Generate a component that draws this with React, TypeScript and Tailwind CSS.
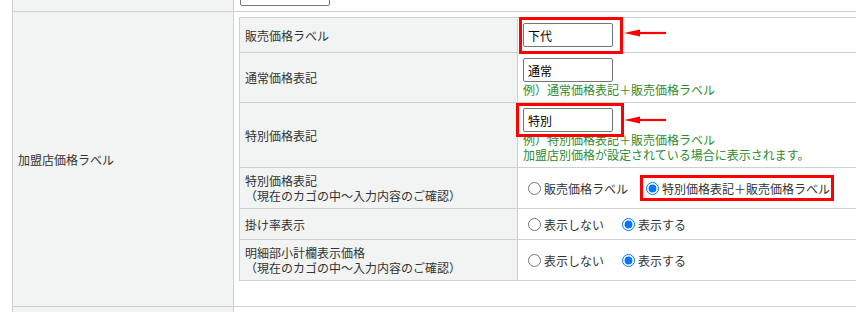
import React from "react";

const font = { fontFamily: '"Noto Sans CJK JP", "Noto Sans", sans-serif' };

function Radio({ label, checked }: { label: string; checked?: boolean }) {
  return (
    <label className="flex items-center gap-[3px]">
      <input type="radio" defaultChecked={checked} className="m-0 h-[13px] w-[13px] accent-[#0075ff]" />
      <span>{label}</span>
    </label>
  );
}

function TextBox({ value }: { value: string }) {
  return (
    <input
      type="text"
      defaultValue={value}
      className="m-0 h-[24px] w-[90px] rounded-[2px] border border-[#767676] bg-white px-[4px] text-[12px] text-black outline-none"
    />
  );
}

function Row({
  h,
  label,
  children,
  last,
}: {
  h: string;
  label: React.ReactNode;
  children: React.ReactNode;
  last?: boolean;
}) {
  return (
    <div className={`flex ${h} ${last ? "" : "border-b border-[#d0d0d0]"}`}>
      <div className="flex w-[278px] shrink-0 items-center border-r border-[#d0d0d0] bg-[#f2f3f3] pl-[5px]">
        {label}
      </div>
      <div className="flex flex-1 items-center">{children}</div>
    </div>
  );
}

function Arrow({ top }: { top: string }) {
  return (
    <svg className={`absolute left-[623px] ${top}`} width="46" height="10" viewBox="0 0 46 10">
      <polygon points="1,5 17,1.5 17,8.5" fill="#f00" />
      <line x1="14" y1="5" x2="43" y2="5" stroke="#f00" strokeWidth="2.2" />
    </svg>
  );
}

export default function App() {
  return (
    <div
      className="relative h-[312px] w-[856px] overflow-hidden bg-white pl-[12px] text-[12px] leading-[15px] text-[#333]"
      style={font}
    >
      <div className="w-[1000px] border-l border-[#d0d0d0]">
        {/* previous row, cut off */}
        <div className="flex h-[12px] border-b border-[#d0d0d0]">
          <div className="w-[221px] shrink-0 border-r border-[#d0d0d0] bg-[#f2f3f3]" />
          <div className="flex flex-1 items-end overflow-hidden pb-[5px] pl-[6px]">
            <div className="h-[24px] w-[90px] shrink-0 rounded-[2px] border border-[#767676] bg-white" />
          </div>
        </div>

        <div className="flex h-[295px] border-b border-[#d0d0d0]">
          <div className="flex w-[221px] shrink-0 items-center border-r border-[#d0d0d0] bg-[#f2f3f3] pl-[5px]">
            加盟店価格ラベル
          </div>
          <div className="flex-1 pl-[5px] pt-[5px]">
            <div className="w-[700px] border border-[#d0d0d0]">
              <Row h="h-[35px]" label="販売価格ラベル">
                <div className="pl-[5px]">
                  <TextBox value="下代" />
                </div>
              </Row>
              <Row h="h-[50px]" label="通常価格表記">
                <div className="flex flex-col pl-[5px]">
                  <TextBox value="通常" />
                  <div className="text-[#2e8b2e]">例）通常価格表記＋販売価格ラベル</div>
                </div>
              </Row>
              <Row h="h-[65px]" label="特別価格表記">
                <div className="flex flex-col pl-[5px]">
                  <TextBox value="特別" />
                  <div className="text-[#2e8b2e]">例）特別価格表記＋販売価格ラベル</div>
                  <div className="text-[#2e8b2e]">加盟店別価格が設定されている場合に表示されます。</div>
                </div>
              </Row>
              <Row
                h="h-[41px]"
                label={
                  <div>
                    <div>特別価格表記</div>
                    <div>（現在のカゴの中～入力内容のご確認）</div>
                  </div>
                }
              >
                <div className="flex items-center gap-[18px] pl-[10px]">
                  <Radio label="販売価格ラベル" />
                  <Radio label="特別価格表記＋販売価格ラベル" checked />
                </div>
              </Row>
              <Row h="h-[31px]" label="掛け率表示">
                <div className="flex items-center gap-[18px] pl-[10px]">
                  <Radio label="表示しない" />
                  <Radio label="表示する" checked />
                </div>
              </Row>
              <Row
                h="h-[40px]"
                last
                label={
                  <div>
                    <div>明細部小計欄表示価格</div>
                    <div>（現在のカゴの中～入力内容のご確認）</div>
                  </div>
                }
              >
                <div className="flex items-center gap-[18px] pl-[10px]">
                  <Radio label="表示しない" />
                  <Radio label="表示する" checked />
                </div>
              </Row>
            </div>
          </div>
        </div>

        <div className="flex h-[20px]">
          <div className="w-[221px] shrink-0 border-r border-[#d0d0d0] bg-[#f2f3f3]" />
          <div className="flex-1" />
        </div>
      </div>

      {/* annotations */}
      <div className="absolute left-[519px] top-[17px] h-[37px] w-[104px] border-[3px] border-[#f00]" />
      <div className="absolute left-[516px] top-[103px] h-[34px] w-[108px] border-[3px] border-[#f00]" />
      <div className="absolute left-[640px] top-[175px] h-[26px] w-[194px] border-[3px] border-[#f00]" />
      <Arrow top="top-[28px]" />
      <Arrow top="top-[115px]" />
    </div>
  );
}
